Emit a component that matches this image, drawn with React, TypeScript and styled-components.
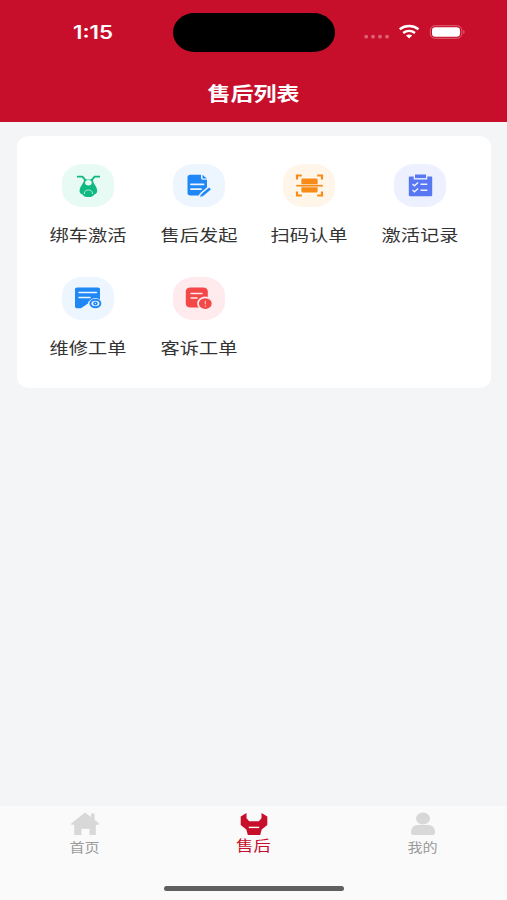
import React from "react";
import styled, { createGlobalStyle } from "styled-components";

const GlobalStyle = createGlobalStyle`
  *, *::before, *::after { box-sizing: border-box; }
  body {
    margin: 0;
    background: #f4f6f8;
    font-family: "Liberation Sans", "Noto Sans CJK SC", sans-serif;
  }
`;

const Screen = styled.div`
  width: 507px;
  height: 900px;
  display: flex;
  flex-direction: column;
  overflow: hidden;
  background: #f3f5f7;
`;

const Header = styled.header`
  height: 122px;
  flex: none;
  background: #c70f2c;
  color: #fff;
`;

const StatusBar = styled.div`
  height: 64px;
  display: grid;
  grid-template-columns: 173px 162px 1fr;
  align-items: center;
`;

const Clock = styled.span`
  padding: 1px 0 0 13px;
  text-align: center;
  font: 600 18px/20px Inter, sans-serif;
  transform: scaleX(1.24);
  transform-origin: 93px 50%;
`;

const Island = styled.div`
  height: 39px;
  border-radius: 22px / 20px;
  background: #000;
`;

const StatusIcons = styled.div`
  display: flex;
  align-items: center;
  padding-left: 28px;
`;

const Title = styled.h1`
  margin: 0;
  height: 56px;
  display: flex;
  align-items: center;
  justify-content: center;
  font-size: 19px;
  font-weight: 700;
  transform: scaleX(1.21);
`;

const Main = styled.main`
  flex: 1;
  padding: 14px 16px 0 17px;
`;

const Card = styled.section`
  height: 252px;
  padding: 28px 16px 0;
  border-radius: 12px / 10px;
  background: #fff;
  display: grid;
  grid-template-columns: repeat(4, 110.5px);
  grid-auto-rows: 113px;
`;

const Action = styled.div`
  display: flex;
  flex-direction: column;
  align-items: center;
`;

const IconTile = styled.div<{ $tint: string }>`
  width: 52px;
  height: 43px;
  border-radius: 21px / 18px;
  background: ${(p) => p.$tint};

  svg { display: block; }
`;

const ActionLabel = styled.span`
  margin-top: 17px;
  font-size: 16px;
  line-height: 24px;
  color: #333;
  white-space: nowrap;
  transform: scaleX(1.2);
`;

const TabBar = styled.nav`
  height: 94px;
  flex: none;
  background: #fafafa;
  display: flex;
  flex-direction: column;
`;

const Tabs = styled.div`
  display: grid;
  grid-template-columns: 1fr 1fr 1fr;
  padding-top: 6px;
`;

const Tab = styled.div<{ $active?: boolean }>`
  display: flex;
  flex-direction: column;
  align-items: center;
  color: ${(p) => (p.$active ? "#c70f2c" : "#9a9a9a")};
`;

const TabLabel = styled.span<{ $active?: boolean }>`
  margin-top: ${(p) => (p.$active ? "0" : "2px")};
  font-size: ${(p) => (p.$active ? "14.4px" : "12.6px")};
  line-height: 20px;
  transform: scaleX(1.2);
`;

const HomeIndicator = styled.div`
  width: 180px;
  height: 5px;
  margin: auto auto 9px 164px;
  border-radius: 3px;
  background: #5f5f5f;
`;

const Glyph = ({ children }: { children: React.ReactNode }) => (
  <svg width="52" height="43" viewBox="0 0 52 43" fill="none">{children}</svg>
);

const ScooterIcon = () => (
  <Glyph>
    <path d="M15 12.600h5.400l3.400 4M38 12.600h-5.400l-3.400 4" stroke="#0fb981" strokeWidth="1.900" />
    <path d="M22 15.500h8.800c.4 5 4.400 6.500 4.400 11.500 0 2-1.200 3-3 3.500-1 2-3 2.500-5.800 2.500s-4.800-.5-5.800-2.500C18.800 30 17.600 29 17.600 27c0-5 4-6.500 4.400-11.500Z" fill="#0fb981" />
    <ellipse cx="26.400" cy="18.700" rx="3.300" ry="2.700" fill="#e8faf4" />
    <path d="M22.400 30v-1c0-4 8-4 8 0v1" stroke="#a9e8d4" strokeWidth="1" />
  </Glyph>
);

const EditDocIcon = () => (
  <Glyph>
    <path d="M17.300 10.700H28v3.100c0 1.300.8 2 2.200 2H34v7.700l-7.500 6.500-.8 1.500H17.300c-1.800 0-2.800-.8-2.800-2.400V13.200c0-1.600 1-2.500 2.800-2.500Z" fill="#1f87f6" />
    <path d="m29.500 10.700 4.300 3.700h-3.200c-.8 0-1.100-.3-1.100-1Z" fill="#1f87f6" />
    <path d="M18 20.300h12.500M18 25.200h10" stroke="#edf5ff" strokeWidth="1.800" strokeLinecap="round" />
    <path d="m29 31 7.500-6.200" stroke="#edf5ff" strokeWidth="5" />
    <path d="m29 31.300 8-6.800" stroke="#1f87f6" strokeWidth="2.600" />
    <path d="m27.200 33 .7-2.800 2.200 1.800Z" fill="#1f87f6" />
  </Glyph>
);

const ScanIcon = () => (
  <Glyph>
    <path d="M14 15.500v-4h4.800M34.200 11.500H39v4M14 27.500v4h4.800M34.200 31.500H39v-4" stroke="#f78b18" strokeWidth="2.200" />
    <path d="M20 14.500h13c1 0 1.600.5 1.600 1.300v4.400H18.400v-4.400c0-.8.6-1.300 1.600-1.300ZM18.400 23.300h16.200v4c0 .8-.6 1.300-1.600 1.300H20c-1 0-1.600-.5-1.600-1.300Z" fill="#f78b18" />
    <path d="M13.200 21.700h26.600" stroke="#f78b18" strokeWidth="1.700" />
  </Glyph>
);

const ClipboardIcon = () => (
  <Glyph>
    <path d="M16 12.500h21c.8 0 1.200.4 1.200 1v17.500c0 .8-.4 1.200-1.200 1.200H16c-.8 0-1.200-.4-1.200-1.200V13.500c0-.6.4-1 1.200-1Z" fill="#5877f2" />
    <path d="M19.700 9.500h13.600v6H19.700Z" fill="#edf0ff" />
    <path d="M21 10.500h11v3.600H21Z" fill="#5877f2" />
    <path d="m18.500 20 2 1.700 3.600-3.200M18.500 26l2 1.700 3.600-3.200M26.500 20.200h6.800M26.500 26.200h6.800" stroke="#edf0ff" strokeWidth="1.500" />
  </Glyph>
);

const RepairIcon = () => (
  <Glyph>
    <path d="M15.200 10.500h20.600c1.400 0 2.200.7 2.200 1.800v11c-5.800-3-12 .2-12 3.200-2 1.300-4.300 3.300-7.300 4.800h-3.500c-1.400 0-2.200-.7-2.200-1.800V12.300c0-1.100.8-1.800 2.200-1.800Z" fill="#1f87f6" />
    <path d="M17 15.500h17.500M17 20.500h11" stroke="#edf5ff" strokeWidth="1.500" strokeLinecap="round" />
    <ellipse cx="33.400" cy="26.500" rx="6.700" ry="5.400" fill="#edf5ff" />
    <ellipse cx="33.400" cy="26.500" rx="5" ry="3.700" fill="#edf5ff" stroke="#1f87f6" strokeWidth="2" />
    <ellipse cx="33.400" cy="26.500" rx="2.300" ry="1.900" fill="#1f87f6" />
    <ellipse cx="33.400" cy="26.500" rx=".7" ry=".6" fill="#edf5ff" />
  </Glyph>
);

const ComplaintIcon = () => (
  <Glyph>
    <path d="M17.600 10.500h12.200c3.200 0 5 1.500 5 4v14l-7 2H17.600c-3 0-4.800-1.400-4.800-3.800V14.300c0-2.400 1.800-3.800 4.800-3.800Z" fill="#f44747" />
    <path d="M18 16.500h11M18 21h6" stroke="#ffeaed" strokeWidth="1.500" strokeLinecap="round" />
    <ellipse cx="32.300" cy="26.600" rx="7.300" ry="6.300" fill="#f44747" stroke="#ffeaed" strokeWidth="1.800" />
    <path d="M32.300 23.700v3.500M32.300 28.600v1.200" stroke="#ffc9cb" strokeWidth="1.100" />
  </Glyph>
);

const HomeIcon = () => (
  <svg width="28" height="24" viewBox="0 0 28 24">
    <path d="m14 .5 6 4.500V1.500h3.600v6.200L28 11.500v1.200h-3.200V23h-6.300v-6.300h-8V23H3.200V12.700H.2v-1.200Z" fill="#d8d8d8" />
  </svg>
);

const ServiceIcon = () => (
  <svg width="28" height="24" viewBox="0 0 28 24">
    <path d="M6.500 1v5.300l2.700 3h9.600l2.700-3V1l5.800 3.500v8.500l-5.600 4.400-1.500 5.600H7.800l-1.500-5.600L.7 13V4.500Z" fill="#c70f2c" />
    <path d="M8.800 15.400h10.400" stroke="#fff" strokeWidth="1.400" />
  </svg>
);

const ProfileIcon = () => (
  <svg width="28" height="24" viewBox="0 0 28 24">
    <ellipse cx="14" cy="6.500" rx="7" ry="6" fill="#d8d8d8" />
    <path d="M8.500 13h11c4 0 6.500 3 6.500 7.500 0 1.500-.7 2.500-2.300 2.500H4.300C2.700 23 2 22 2 20.500 2 16 4.500 13 8.500 13Z" fill="#d8d8d8" />
  </svg>
);

const SignalIcons = () => (
  <svg width="106" height="24" viewBox="0 0 106 24" fill="none">
    <g fill="#dd6374">
      <circle cx="3.200" cy="16.700" r="1.900" /><circle cx="10" cy="16.700" r="1.900" />
      <circle cx="17" cy="16.700" r="1.900" /><circle cx="24" cy="16.700" r="1.900" />
    </g>
    <path d="M36.700 9.200c5.700-4.300 13.100-4.300 18.800 0M40.200 12.900c3.500-2.700 8.300-2.700 11.800 0" stroke="#fff" strokeWidth="2.500" />
    <path d="M43 15.600c1.900-1.500 4.300-1.500 6.200 0l-3.100 2.900Z" fill="#fff" />
    <rect x="67.300" y="5.700" width="31.500" height="12.600" rx="4.500" stroke="#dd6374" />
    <rect x="69" y="7.200" width="28" height="9.600" rx="3.300" fill="#fff" />
    <path d="M100.300 10v4c1.700-.7 1.700-3.300 0-4Z" fill="#dd6374" />
  </svg>
);

const actions = [
  { label: "绑车激活", tint: "#e8faf4", Icon: ScooterIcon },
  { label: "售后发起", tint: "#edf5ff", Icon: EditDocIcon },
  { label: "扫码认单", tint: "#fff5e9", Icon: ScanIcon },
  { label: "激活记录", tint: "#edf0ff", Icon: ClipboardIcon },
  { label: "维修工单", tint: "#edf5ff", Icon: RepairIcon },
  { label: "客诉工单", tint: "#ffeaed", Icon: ComplaintIcon },
];

const tabs = [
  { label: "首页", Icon: HomeIcon, active: false },
  { label: "售后", Icon: ServiceIcon, active: true },
  { label: "我的", Icon: ProfileIcon, active: false },
];

export default function App() {
  return (
    <Screen lang="zh-CN">
      <GlobalStyle />
      <Header>
        <StatusBar>
          <Clock>1:15</Clock>
          <Island />
          <StatusIcons><SignalIcons /></StatusIcons>
        </StatusBar>
        <Title>售后列表</Title>
      </Header>
      <Main>
        <Card>
          {actions.map(({ label, tint, Icon }) => (
            <Action key={label}>
              <IconTile $tint={tint}><Icon /></IconTile>
              <ActionLabel>{label}</ActionLabel>
            </Action>
          ))}
        </Card>
      </Main>
      <TabBar>
        <Tabs>
          {tabs.map(({ label, Icon, active }) => (
            <Tab key={label} $active={active}>
              <Icon />
              <TabLabel $active={active}>{label}</TabLabel>
            </Tab>
          ))}
        </Tabs>
        <HomeIndicator />
      </TabBar>
    </Screen>
  );
}
